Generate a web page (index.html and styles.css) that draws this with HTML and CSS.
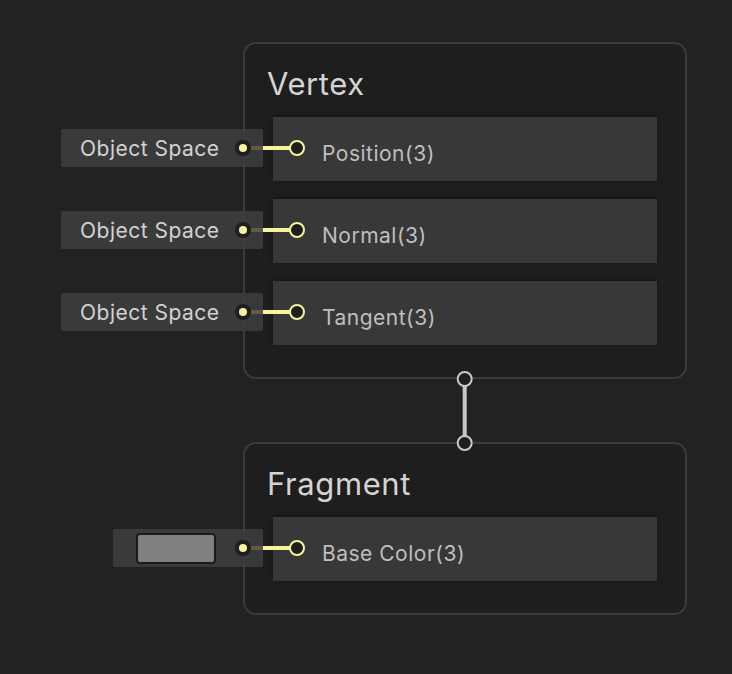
FILE: index.html
```html
<!DOCTYPE html>
<html>
<head>
<meta charset="utf-8">
<link rel="stylesheet" href="styles.css">
</head>
<body>
<div class="canvas">
  <div class="node node-vertex">
    <div class="title">Vertex</div>
    <div class="rows">
      <div class="row">
        <div class="input"><span class="input-label">Object Space</span></div>
        <svg class="wire" width="80" height="24" viewBox="0 0 80 24"><circle cx="10" cy="12" r="8" fill="#1f1f1f"/><circle cx="10" cy="12" r="4" fill="#f6f49d"/><rect x="18" y="10" width="12" height="4" fill="#5c5d49"/><rect x="30" y="10" width="27" height="4" fill="#f6f49d"/><circle cx="64" cy="12" r="7" fill="#1e1e1e" stroke="#f6f49d" stroke-width="2"/></svg>
        <span class="row-label">Position(3)</span>
      </div>
      <div class="row">
        <div class="input"><span class="input-label">Object Space</span></div>
        <svg class="wire" width="80" height="24" viewBox="0 0 80 24"><circle cx="10" cy="12" r="8" fill="#1f1f1f"/><circle cx="10" cy="12" r="4" fill="#f6f49d"/><rect x="18" y="10" width="12" height="4" fill="#5c5d49"/><rect x="30" y="10" width="27" height="4" fill="#f6f49d"/><circle cx="64" cy="12" r="7" fill="#1e1e1e" stroke="#f6f49d" stroke-width="2"/></svg>
        <span class="row-label">Normal(3)</span>
      </div>
      <div class="row">
        <div class="input"><span class="input-label">Object Space</span></div>
        <svg class="wire" width="80" height="24" viewBox="0 0 80 24"><circle cx="10" cy="12" r="8" fill="#1f1f1f"/><circle cx="10" cy="12" r="4" fill="#f6f49d"/><rect x="18" y="10" width="12" height="4" fill="#5c5d49"/><rect x="30" y="10" width="27" height="4" fill="#f6f49d"/><circle cx="64" cy="12" r="7" fill="#1e1e1e" stroke="#f6f49d" stroke-width="2"/></svg>
        <span class="row-label">Tangent(3)</span>
      </div>
    </div>
  </div>

  <div class="node node-fragment">
    <div class="title">Fragment</div>
    <div class="rows">
      <div class="row">
        <div class="input input-color"><span class="swatch"></span></div>
        <svg class="wire" width="80" height="24" viewBox="0 0 80 24"><circle cx="10" cy="12" r="8" fill="#1f1f1f"/><circle cx="10" cy="12" r="4" fill="#f6f49d"/><rect x="18" y="10" width="12" height="4" fill="#5c5d49"/><rect x="30" y="10" width="27" height="4" fill="#f6f49d"/><circle cx="64" cy="12" r="7" fill="#1e1e1e" stroke="#f6f49d" stroke-width="2"/></svg>
        <span class="row-label">Base Color(3)</span>
      </div>
    </div>
  </div>

  <svg class="link" width="20" height="84" viewBox="0 0 20 84"><rect x="8.7" y="16" width="4" height="52" fill="#c8c8c8"/><circle cx="10.7" cy="10" r="7" fill="#1e1e1e" stroke="#c8c8c8" stroke-width="2"/><circle cx="10.7" cy="74" r="7" fill="#1e1e1e" stroke="#c8c8c8" stroke-width="2"/></svg>
</div>
</body>
</html>
```

FILE: styles.css
```css
html, body {
  margin: 0;
  padding: 0;
  background: #222222;
  font-family: Inter, "Noto Sans", sans-serif;
}

.canvas {
  position: relative;
  width: 732px;
  height: 674px;
  overflow: hidden;
}

.node {
  position: absolute;
  left: 243px;
  width: 444px;
  box-sizing: border-box;
  background: #1e1e1e;
  border: 2px solid #3b3b3b;
  border-radius: 13px;
  padding: 22px 28px 32px;
}

.node-vertex {
  top: 42px;
}

.node-fragment {
  top: 442px;
}

.title {
  font-size: 31px;
  line-height: 36px;
  letter-spacing: 0.6px;
  color: #d4d4d4;
  margin-left: -6px;
  margin-bottom: 15px;
}

.rows {
  display: flex;
  flex-direction: column;
  gap: 18px;
}

.row {
  position: relative;
  height: 64px;
  background: #383838;
  box-shadow: 0 -1px 4px rgba(0, 0, 0, 0.35);
  display: flex;
  align-items: center;
  padding-left: 49px;
  padding-top: 8px;
  box-sizing: border-box;
}

.row-label {
  font-size: 21px;
  letter-spacing: 0.5px;
  color: #bfbfbf;
}

.input {
  position: absolute;
  left: -212px;
  top: 12px;
  width: 202px;
  height: 38px;
  background: rgba(62, 62, 62, 0.85);
  border-radius: 2px;
  display: flex;
  align-items: center;
  box-sizing: border-box;
  padding-left: 19px;
}

.input-label {
  font-size: 21px;
  letter-spacing: 0.5px;
  color: #d2d2d2;
}

.input-color {
  left: -160px;
  width: 150px;
  padding-left: 23px;
}

.swatch {
  width: 80px;
  height: 31px;
  box-sizing: border-box;
  background: #808080;
  border: 2px solid #1b1b1b;
  border-radius: 4px;
}

.wire {
  position: absolute;
  left: -40px;
  top: 19px;
}

.link {
  position: absolute;
  left: 454px;
  top: 369px;
}
```
